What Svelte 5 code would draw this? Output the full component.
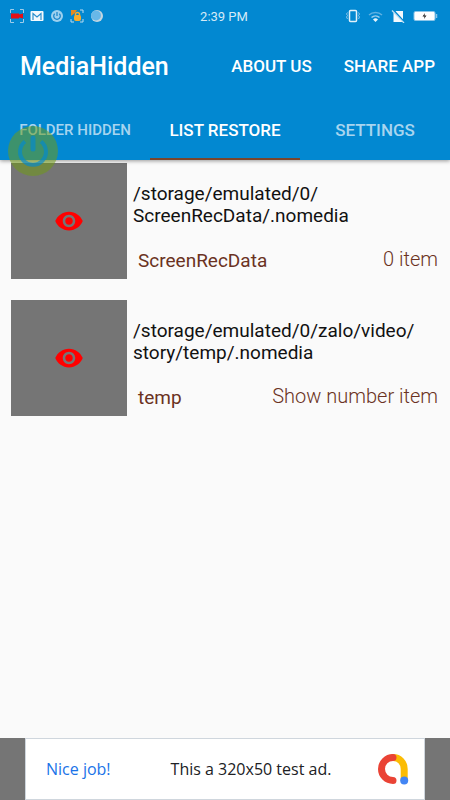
<script>
    let tabs = ["Folder hidden", "List restore", "Settings"];
    let active = 1;

    let folders = [
        { path: ["/storage/emulated/0/", "ScreenRecData/.nomedia"], name: "ScreenRecData", count: "0 item" },
        { path: ["/storage/emulated/0/zalo/video/", "story/temp/.nomedia"], name: "temp", count: "Show number item" }
    ];
</script>

<div class="app">
    <header>
        <div class="status">
            <div class="icons left">
                <svg width="14" height="14" viewBox="0 0 14 14">
                    <path d="M.5 4V.5H4M10 .5h3.500V4M13.500 10v3.500H10M4 13.500H.5V10" fill="none" stroke="#9fcdea" />
                    <path d="M1 4.500h8v1l4-1v5l-4-1v1H1z" fill="#e60f16" />
                </svg>
                <svg width="14" height="14" viewBox="0 0 14 14">
                    <rect x=".5" y="2" width="13" height="10" rx="1" fill="#f4f9fd" />
                    <path d="M3 11V4.500l4 3.500 4-3.500V11" fill="none" stroke="#2b8fce" stroke-width="1.200" />
                </svg>
                <svg width="14" height="14" viewBox="0 0 14 14">
                    <circle cx="7" cy="7" r="6" fill="#9dd0ee" />
                    <path d="M4.700 4.700a3.300 3.300 0 1 0 4.600 0M7 3v4" fill="none" stroke="#1583c9" stroke-width="1.200" />
                </svg>
                <svg width="14" height="14" viewBox="0 0 14 14">
                    <path d="M10 1h3v3M1 10v3h3M13 10v3h-3" fill="none" stroke="#b9dbf0" />
                    <path d="M1 1h6L5 4 1 7z" fill="#e08a24" />
                    <rect x="4" y="6" width="7" height="6" rx="2" fill="#f9ac2c" />
                    <path d="M5.500 7V5.500a2 2 0 0 1 4 0V7" fill="none" stroke="#f9ac2c" stroke-width="1.400" />
                </svg>
                <svg width="14" height="14" viewBox="0 0 14 14">
                    <circle cx="7" cy="7" r="6" fill="#c3d6e0" />
                    <circle cx="6" cy="6.500" r="5" fill="#68b8e8" />
                </svg>
            </div>
            <time>2:39 PM</time>
            <div class="icons right">
                <svg width="14" height="14" viewBox="0 0 14 14">
                    <rect x="3.500" y="1.500" width="7" height="11" rx="1" fill="none" stroke="#e3f1fa" stroke-width="1.500" />
                    <path d="M1.500 3.500l-1 1.500 1 1.500-1 1.500 1 2M12.500 3.500l1 1.500-1 1.500 1 1.500-1 2" fill="none" stroke="#8dc6e9" />
                </svg>
                <svg width="15" height="14" viewBox="0 0 15 14">
                    <path d="M1 6a9.500 9.500 0 0 1 13 0" fill="none" stroke="#5fb1e2" stroke-width="1.500" />
                    <path d="M3.500 8.500a6 6 0 0 1 8 0" fill="none" stroke="#9acdec" stroke-width="1.500" />
                    <path d="M5 10.500a3.500 3.500 0 0 1 5 0L7.500 13z" fill="#e6f3fb" />
                </svg>
                <svg width="14" height="14" viewBox="0 0 14 14">
                    <path d="M5 2h7v11H2.500V4.500z" fill="#f4f9fd" />
                    <path d="M2 1l12 13" stroke="#0288d1" stroke-width="2" />
                    <path d="M1 1.500L13 14" stroke="#c5e2f4" stroke-width="1.200" />
                </svg>
                <svg width="25" height="14" viewBox="0 0 25 14">
                    <rect x="1" y="2.500" width="21" height="9" rx="1.500" fill="#fff" stroke="#8bc5e9" />
                    <path d="M23.500 5v4" stroke="#8bc5e9" stroke-width="1.500" />
                    <path d="M12 4L9.500 7.500h2L11 10l2.500-3.500h-2z" fill="#222" />
                </svg>
            </div>
        </div>
        <div class="toolbar">
            <h1>MediaHidden</h1>
            <button>About us</button>
            <button>Share app</button>
        </div>
        <nav>
            {#each tabs as tab, i}
                <button class:small={i == 0} class:active={active == i} on:click={() => active = i}>{tab}</button>
            {/each}
        </nav>
        <button class="power" aria-label="Power">
            <svg viewBox="0 0 50 50">
                <circle cx="25" cy="25" r="25" fill="#719b16" fill-opacity=".54" />
                <path d="M17 15.500a13 13 0 1 0 16 0" fill="none" stroke="#0288d1" stroke-opacity=".65" stroke-width="4" />
                <path d="M25 12v11" stroke="#0288d1" stroke-opacity=".65" stroke-width="5" stroke-linecap="round" />
            </svg>
        </button>
    </header>

    <main>
        {#each folders as folder}
            <article>
                <div class="thumb">
                    <svg width="30" height="30" viewBox="0 0 24 24">
                        <path fill="#f00" d="M12 4.500C7 4.500 2.730 7.610 1 12c1.730 4.390 6 7.500 11 7.500s9.270-3.110 11-7.500c-1.730-4.390-6-7.500-11-7.500zM12 17c-2.760 0-5-2.240-5-5s2.240-5 5-5 5 2.240 5 5-2.240 5-5 5zm0-8c-1.660 0-3 1.340-3 3s1.340 3 3 3 3-1.340 3-3-1.340-3-3-3z" />
                    </svg>
                </div>
                <div class="info">
                    <p>{folder.path[0]}<wbr>{folder.path[1]}</p>
                    <div class="meta">
                        <span class="name">{folder.name}</span>
                        <span class="count">{folder.count}</span>
                    </div>
                </div>
            </article>
        {/each}
    </main>

    <footer>
        <a class="ad" href="#ad">
            <span class="nice">Nice job!</span>
            <span class="text">This a 320x50 test ad.</span>
            <svg width="32" height="32" viewBox="0 0 32 32" fill="none" stroke-width="7" stroke-linecap="round">
                <path d="M16 4.500c6.500 0 11.200 5 11.200 11.500v11" stroke="#fbbc04" />
                <path d="M16 4.500a11.300 11.300 0 0 0 0 23" stroke="#ea4335" />
                <circle cx="27.200" cy="27.500" r="4" fill="#4285f4" />
            </svg>
        </a>
    </footer>
</div>

<style>
    :global(body) {
        margin: 0;
        background: #fafafa;
    }

    .app {
        display: flex;
        flex-direction: column;
        min-height: 100vh;
        font-family: Roboto, sans-serif;
    }

    button {
        border: none;
        padding: 0;
        background: none;
        color: #fff;
        font: 500 17px Roboto, sans-serif;
        text-transform: uppercase;
        cursor: pointer;
    }

    header {
        position: relative;
        background: #0288d1;
        color: #fff;
        box-shadow: 0 1px 4px rgba(0, 0, 0, 0.4);
    }

    .status {
        display: grid;
        grid-template-columns: 1fr auto 1fr;
        align-items: center;
        height: 32px;
        padding: 0 12px 0 10px;
    }

    .status time {
        font-size: 13px;
        color: #d5eaf7;
    }

    .icons {
        display: flex;
        align-items: center;
        gap: 6px;
    }

    .right {
        justify-content: flex-end;
        gap: 8px;
    }

    .toolbar {
        display: flex;
        align-items: center;
        gap: 32px;
        height: 68px;
        padding: 0 15px 0 20px;
    }

    h1 {
        flex: 1;
        margin: 0;
        font-size: 25px;
        font-weight: 500;
    }

    nav {
        display: flex;
        height: 60px;
    }

    nav button {
        flex: 1;
        border-top: 2px solid transparent;
        border-bottom: 2px solid transparent;
        color: #a8d5ef;
        font-size: 17px;
    }

    nav .small {
        font-size: 15px;
    }

    nav .active {
        border-bottom-color: #79452c;
        color: #fff;
    }

    .power {
        position: absolute;
        left: 8px;
        bottom: -16px;
        width: 50px;
        height: 50px;
    }

    .power svg {
        display: block;
    }

    main {
        display: flex;
        flex-direction: column;
        gap: 21px;
        padding: 3px 12px 21px 11px;
    }

    article {
        display: flex;
        gap: 6px;
    }

    .thumb {
        display: flex;
        align-items: center;
        justify-content: center;
        width: 116px;
        height: 116px;
        background: #757575;
    }

    .info {
        flex: 1;
        padding-top: 20px;
    }

    p {
        margin: 0 0 20px;
        color: #111;
        font-size: 19px;
        line-height: 22px;
    }

    .meta {
        display: flex;
        justify-content: space-between;
        padding-left: 5px;
        color: #6a3222;
        font-size: 19px;
        line-height: 24px;
    }

    .name {
        padding-top: 2px;
    }

    .count {
        font-size: 20px;
        font-weight: 300;
    }

    footer {
        display: flex;
        justify-content: center;
        margin-top: auto;
        background: #757575;
    }

    .ad {
        display: flex;
        align-items: center;
        box-sizing: border-box;
        width: 400px;
        height: 62px;
        padding: 0 15px 0 20px;
        border: 1px solid #cfd6dd;
        background: #fff;
        color: #202124;
        font: 16px "Open Sans", sans-serif;
        text-decoration: none;
        white-space: nowrap;
    }

    .ad svg {
        flex-shrink: 0;
        margin-left: auto;
    }

    .nice {
        margin-right: 60px;
        color: #1a73e8;
        font-weight: 500;
    }
</style>
